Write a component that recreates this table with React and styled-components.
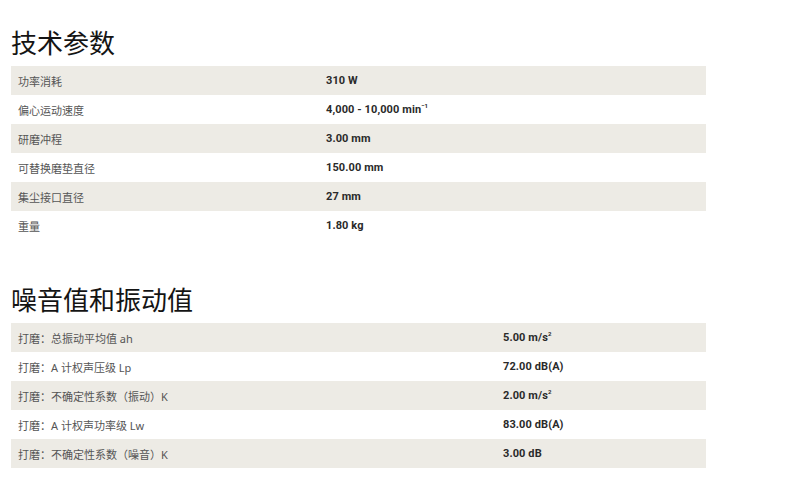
import React from "react";
import styled, { createGlobalStyle } from "styled-components";

const GlobalStyle = createGlobalStyle`
  html, body {
    margin: 0;
    padding: 0;
    background: #fff;
  }
  body {
    font-family: "Noto Sans CJK SC", "Noto Sans", sans-serif;
  }
`;

const Page = styled.div`
  padding: 24px 11px 0;
  width: 695px;
  display: flex;
  flex-direction: column;
  gap: 41px;
`;

const Section = styled.section`
  display: flex;
  flex-direction: column;
  gap: 6px;
`;

const Heading = styled.h2`
  margin: 0;
  font-size: 26px;
  line-height: 36px;
  font-weight: 400;
  color: #141414;
  font-family: "Noto Sans CJK SC", sans-serif;
`;

const Table = styled.div`
  display: flex;
  flex-direction: column;
`;

const Row = styled.div`
  display: flex;
  align-items: center;
  height: 29px;
  background: ${(p) => (p.$shaded ? "#edebe5" : "#fff")};
`;

const Label = styled.div`
  width: ${(p) => p.$width}px;
  padding-left: 7px;
  box-sizing: border-box;
  font-size: 11px;
  color: #555;
  font-family: "Noto Sans", "Noto Sans CJK SC", sans-serif;
`;

const Value = styled.div`
  font-size: 11px;
  font-weight: 700;
  color: #2a2a2a;
  letter-spacing: 0.1px;
  font-family: "Roboto", "Noto Sans CJK SC", sans-serif;
`;

const Sup = styled.sup`
  font-size: 6px;
  vertical-align: 5px;
  line-height: 0;
`;

const TECH = [
  ["功率消耗", <>310 W</>],
  ["偏心运动速度", <>4,000 - 10,000 min<Sup>−1</Sup></>],
  ["研磨冲程", <>3.00 mm</>],
  ["可替换磨垫直径", <>150.00 mm</>],
  ["集尘接口直径", <>27 mm</>],
  ["重量", <>1.80 kg</>],
];

const NOISE = [
  ["打磨：总振动平均值 ah", <>5.00 m/s<Sup>2</Sup></>],
  ["打磨：A 计权声压级 Lp", <>72.00 dB(A)</>],
  ["打磨：不确定性系数（振动）K", <>2.00 m/s<Sup>2</Sup></>],
  ["打磨：A 计权声功率级 Lw", <>83.00 dB(A)</>],
  ["打磨：不确定性系数（噪音）K", <>3.00 dB</>],
];

const SpecTable = ({ rows, labelWidth }) => (
  <Table>
    {rows.map(([label, value], i) => (
      <Row key={i} $shaded={i % 2 === 0}>
        <Label $width={labelWidth}>{label}</Label>
        <Value>{value}</Value>
      </Row>
    ))}
  </Table>
);

export default function App() {
  return (
    <Page>
      <GlobalStyle />
      <Section>
        <Heading>技术参数</Heading>
        <SpecTable rows={TECH} labelWidth={315} />
      </Section>
      <Section>
        <Heading>噪音值和振动值</Heading>
        <SpecTable rows={NOISE} labelWidth={492} />
      </Section>
    </Page>
  );
}
